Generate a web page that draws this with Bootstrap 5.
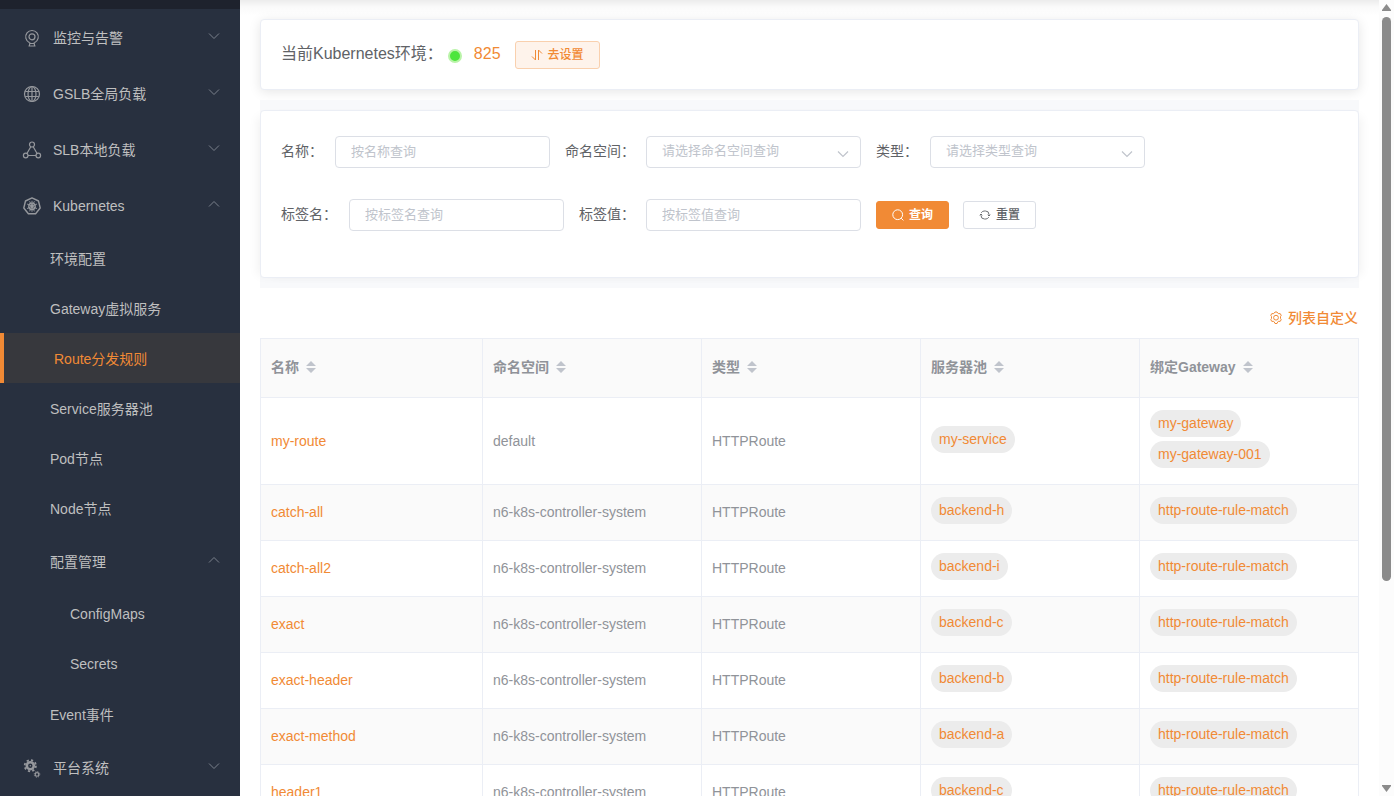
<!DOCTYPE html>
<html lang="zh-CN">
<head>
<meta charset="utf-8">
<meta name="viewport" content="width=device-width, initial-scale=1">
<title>Route分发规则</title>
<link href="https://cdn.jsdelivr.net/npm/bootstrap@5.3.0/dist/css/bootstrap.min.css" rel="stylesheet">
<style>
  :root { --accent: #f18a35; --line: #ebeef5; --field: #dcdfe6; --ink: #606266; --muted: #909399; --faint: #c0c4cc; }
  body { font-family: "Liberation Sans", "Noto Sans CJK SC", sans-serif; font-size: 14px; line-height: 20px; color: var(--ink); background: #fff; }
  a { color: var(--accent); text-decoration: none; }
  svg { display: block; flex: none; }

  .side { width: 240px; background: #28303f; }
  .side-top { height: 9px; background: #1e222d; }
  .side .nav-link { height: 50px; padding: 2px 20px 0 50px; color: #bfbfbf; display: flex; align-items: center; }
  .side .nav-link.top { height: 56px; padding-left: 22px; }
  .side .nav-link.sub { height: 56px; }
  .side .nav-link.deep { padding-left: 70px; padding-top: 0; }
  .side .nav-link.active { background: #37383d; color: var(--accent); border-left: 4px solid var(--accent); }
  .side .ico { width: 20px; height: 20px; margin-right: 11px; color: #96989d; }
  .side .chev { width: 12px; height: 12px; margin-left: auto; margin-bottom: 4px; color: #7b818c; }

  .page { min-width: 0; padding: 19px 20px 0; background: linear-gradient(#ececec, #fafafa 7px, #fff 16px) no-repeat top / 100% 16px; }
  .panel { border: 1px solid var(--line); border-radius: 4px; background: #fff; }
  .env { padding: 20px; margin-bottom: 10px; font-size: 16px; box-shadow: 0 2px 12px rgba(0,0,0,.1); }
  .env-text { line-height: 24px; padding-bottom: 2px; }
  .env .btn { margin: 1px 0 0 14px; }
  .status-dot { width: 14px; height: 14px; border-radius: 50%; background: #4ce53c; border: 2px solid #b9f3a8; margin: 2px 12px 0 5px; }
  .band { background: #f8f9fb; padding: 10px 0; }
  .filters { padding: 25px 20px 46px; box-shadow: -7px 2px 10px -5px rgba(0,0,0,.06), 7px 2px 10px -5px rgba(0,0,0,.06); }
  .filters .line + .line { margin-top: 31px; }
  .field-label { margin-right: 12px; padding-bottom: 2px; white-space: nowrap; }
  .field-label.tight { margin-right: 11px; }
  .box.form-control, .box.form-select { width: 215px; height: 32px; margin-right: 15px; padding: 0 15px 2px; border: 1px solid var(--field); border-radius: 4px; font-size: 13px; line-height: 28px; color: var(--ink); }
  .box.form-control::placeholder { color: var(--faint); opacity: 1; }
  .box.form-select { color: var(--faint); background-position: right 11px top 11px; background-size: 12px 12px;
    background-image: url("data:image/svg+xml,%3Csvg xmlns='http://www.w3.org/2000/svg' viewBox='0 0 12 12'%3E%3Cpath d='M1 3.500l5 5 5-5' fill='none' stroke='%23c0c4cc' stroke-width='1.200'/%3E%3C/svg%3E"); }
  .mini.btn { height: 28px; padding: 0 15px; border-radius: 3px; font-size: 12px; line-height: 16px; font-weight: 500; display: inline-flex; align-items: center; gap: 5px; border: 1px solid var(--field); color: var(--ink); background: #fff; }
  .mini.go { color: var(--accent); background: #fef3eb; border-color: #f9d0ae; }
  .mini.find { color: #fff; background: var(--accent); border-color: var(--accent); font-weight: 700; margin-right: 14px; }
  .custom { margin: 20px 0 10px; padding-right: 1px; font-weight: 500; }
  .custom a { gap: 5px; }

  .grid.table { table-layout: fixed; margin: 0; color: var(--muted); border-color: var(--line); }
  .grid .first { width: 222px; }
  .grid th, .grid td { border: 1px solid var(--line); padding: 12px 10px; vertical-align: middle; line-height: 23px; }
  .grid th { height: 59px; padding: 11px 10px 13px; background: #fafafa; color: var(--muted); font-weight: 700; }
  .grid th span { gap: 7px; }
  .grid tbody tr:nth-child(even) td { background: #fafafa; }
  .tag { display: block; width: fit-content; height: 27px; padding: 0 8px; line-height: 27px; border-radius: 14px; background: #ececec; margin-bottom: 4px; white-space: nowrap; }
  .sort { width: 10px; height: 12px; color: var(--faint); }

  .rail { width: 15px; background: #fcfcfc; padding: 4px 3px; }
  .rail-track { padding: 6px 0; }
  .rail-thumb { height: 74%; border-radius: 5px; background: #8b8b8b; }
</style>
</head>
<body>
<svg width="0" height="0" class="position-absolute" aria-hidden="true">
  <defs>
    <symbol id="down" viewBox="0 0 12 12"><path d="M1 3.500l5 5 5-5" fill="none" stroke="currentColor"/></symbol>
    <symbol id="up" viewBox="0 0 12 12"><path d="M1 8.500l5-5 5 5" fill="none" stroke="currentColor"/></symbol>
    <symbol id="sort" viewBox="0 0 10 12"><path d="M0 5l5-5 5 5zM0 7l5 5 5-5z" fill="currentColor"/></symbol>
  </defs>
</svg>
<div class="d-flex vh-100 overflow-hidden">
  <aside class="side flex-shrink-0 overflow-hidden">
    <div class="side-top"></div>
    <nav class="nav flex-column flex-nowrap">
      <a class="nav-link top" href="#"><svg class="ico" viewBox="0 0 20 20" fill="none" stroke="currentColor" stroke-width="1.200"><path d="M7.500 14.600a6.300 6.300 0 1 1 5 0M8 14.500l-.7 3.500M12 14.500l.7 3.500M6.500 18h7M8 15.500h4"/><circle cx="10" cy="8.800" r="3"/></svg>监控与告警<svg class="chev"><use href="#down"/></svg></a>
      <a class="nav-link top" href="#"><svg class="ico" viewBox="0 0 20 20" fill="none" stroke="currentColor" stroke-width="1.200"><circle cx="10" cy="10" r="7.500"/><ellipse cx="10" cy="10" rx="4" ry="7.500"/><path d="M10 2.500v15M3.200 7.500h13.600M3.200 12.500h13.600"/></svg>GSLB全局负载<svg class="chev"><use href="#down"/></svg></a>
      <a class="nav-link top" href="#"><svg class="ico" viewBox="0 0 20 20" fill="none" stroke="currentColor" stroke-width="1.200"><circle cx="10" cy="4.500" r="2.500"/><circle cx="3.700" cy="15.500" r="2.300"/><circle cx="16.300" cy="15.500" r="2.300"/><path d="M8.800 6.800l-3.900 6.700M11.200 6.800l3.900 6.700M6 15.500h8"/></svg>SLB本地负载<svg class="chev"><use href="#down"/></svg></a>
      <a class="nav-link top" href="#"><svg class="ico" viewBox="0 0 20 20" fill="none" stroke="currentColor" stroke-width="1.400"><path d="M10 1.900l6.500 3.100 1.700 7-4.600 5.800H6.400L1.800 12l1.700-7z" stroke-linejoin="round"/><circle cx="10" cy="10.300" r="3.200"/><circle cx="10" cy="10.300" r="1" fill="currentColor"/><path d="M10 4.800v11M5 8l10 4.600M15 8L5 12.600M7.600 15.300l4.800-10M12.400 15.300l-4.800-10" stroke-width=".9"/></svg>Kubernetes<svg class="chev"><use href="#up"/></svg></a>
      <a class="nav-link" href="#">环境配置</a>
      <a class="nav-link" href="#">Gateway虚拟服务</a>
      <a class="nav-link active" href="#" aria-current="page">Route分发规则</a>
      <a class="nav-link" href="#">Service服务器池</a>
      <a class="nav-link" href="#">Pod节点</a>
      <a class="nav-link" href="#">Node节点</a>
      <a class="nav-link sub" href="#">配置管理<svg class="chev"><use href="#up"/></svg></a>
      <a class="nav-link deep" href="#">ConfigMaps</a>
      <a class="nav-link deep" href="#">Secrets</a>
      <a class="nav-link" href="#">Event事件</a>
      <a class="nav-link top" href="#"><svg class="ico" viewBox="0 0 20 20" fill="none" stroke="currentColor"><circle cx="8.300" cy="7.700" r="3.500" stroke-width="2.600"/><circle cx="8.300" cy="7.700" r="5.600" stroke-width="1.800" stroke-dasharray="2.200 2.198"/><circle cx="8.300" cy="7.700" r=".7" fill="currentColor" stroke="none"/><circle cx="15" cy="16.400" r="1.800" stroke-width="1.200"/><circle cx="15" cy="16.400" r="2.800" stroke-width="1" stroke-dasharray="1.100 1.099"/></svg>平台系统<svg class="chev"><use href="#down"/></svg></a>
    </nav>
  </aside>

  <main class="page flex-fill overflow-hidden">
    <section class="panel env d-flex align-items-center">
      <span class="env-text">当前Kubernetes环境：</span>
      <span class="status-dot"></span>
      <a class="env-text" href="#">825</a>
      <button type="button" class="btn mini go"><svg width="12" height="12" viewBox="0 0 12 12" fill="none" stroke="currentColor"><path d="M4.500 1v10L1 7.500M7.500 11V1L11 4.500"/></svg>去设置</button>
    </section>

    <div class="band">
      <form class="panel filters">
        <div class="line d-flex align-items-center">
          <label class="field-label" for="f-name">名称：</label><input id="f-name" class="form-control box" placeholder="按名称查询">
          <label class="field-label tight" for="f-ns">命名空间：</label><select id="f-ns" class="form-select box"><option>请选择命名空间查询</option></select>
          <label class="field-label" for="f-type">类型：</label><select id="f-type" class="form-select box"><option>请选择类型查询</option></select>
        </div>
        <div class="line d-flex align-items-center">
          <label class="field-label" for="f-key">标签名：</label><input id="f-key" class="form-control box" placeholder="按标签名查询">
          <label class="field-label tight" for="f-val">标签值：</label><input id="f-val" class="form-control box" placeholder="按标签值查询">
          <button type="button" class="btn mini find"><svg width="12" height="12" viewBox="0 0 12 12" fill="none" stroke="currentColor"><circle cx="5.700" cy="5.700" r="4.900"/><path d="M9.200 9.200l2.200 2.200"/></svg>查询</button>
          <button type="button" class="btn mini"><svg width="12" height="12" viewBox="0 0 12 12" fill="none" stroke="currentColor" stroke-width=".9"><path d="M5 2h1.500A3.500 3.500 0 0 1 10 5.500V7M7 10H5.500A3.500 3.500 0 0 1 2 6.500V5M.7 6.300L2 5l1.300 1.300M8.700 5.700L10 7l1.300-1.300M2.200 3.800A4 4 0 0 1 5 2M9.800 8.200A4 4 0 0 1 7 10"/></svg>重置</button>
        </div>
      </form>
    </div>

    <div class="custom d-flex justify-content-end">
      <a class="d-flex align-items-center" href="#"><svg width="14" height="14" viewBox="0 0 14 14" fill="none" stroke="currentColor"><path d="M5.200 2.200L6 1h2l.8 1.200.9.500 1.500-.1 1 1.700-.7 1.300v1.800l.7 1.300-1 1.700-1.500-.1-.9.500L8 12.500H6l-.8-1.700-.9-.5-1.500.1-1-1.700.7-1.300V5.600l-.7-1.300 1-1.700 1.500.1z"/><circle cx="7" cy="6.700" r="2.400"/></svg>列表自定义</a>
    </div>

    <table class="table grid">
      <thead>
        <tr>
          <th class="first" scope="col"><span class="d-flex align-items-center">名称<svg class="sort"><use href="#sort"/></svg></span></th>
          <th scope="col"><span class="d-flex align-items-center">命名空间<svg class="sort"><use href="#sort"/></svg></span></th>
          <th scope="col"><span class="d-flex align-items-center">类型<svg class="sort"><use href="#sort"/></svg></span></th>
          <th scope="col"><span class="d-flex align-items-center">服务器池<svg class="sort"><use href="#sort"/></svg></span></th>
          <th scope="col"><span class="d-flex align-items-center">绑定Gateway<svg class="sort"><use href="#sort"/></svg></span></th>
        </tr>
      </thead>
      <tbody>
        <tr><td><a href="#">my-route</a></td><td>default</td><td>HTTPRoute</td><td><a class="tag" href="#">my-service</a></td><td><a class="tag" href="#">my-gateway</a><a class="tag" href="#">my-gateway-001</a></td></tr>
        <tr><td><a href="#">catch-all</a></td><td>n6-k8s-controller-system</td><td>HTTPRoute</td><td><a class="tag" href="#">backend-h</a></td><td><a class="tag" href="#">http-route-rule-match</a></td></tr>
        <tr><td><a href="#">catch-all2</a></td><td>n6-k8s-controller-system</td><td>HTTPRoute</td><td><a class="tag" href="#">backend-i</a></td><td><a class="tag" href="#">http-route-rule-match</a></td></tr>
        <tr><td><a href="#">exact</a></td><td>n6-k8s-controller-system</td><td>HTTPRoute</td><td><a class="tag" href="#">backend-c</a></td><td><a class="tag" href="#">http-route-rule-match</a></td></tr>
        <tr><td><a href="#">exact-header</a></td><td>n6-k8s-controller-system</td><td>HTTPRoute</td><td><a class="tag" href="#">backend-b</a></td><td><a class="tag" href="#">http-route-rule-match</a></td></tr>
        <tr><td><a href="#">exact-method</a></td><td>n6-k8s-controller-system</td><td>HTTPRoute</td><td><a class="tag" href="#">backend-a</a></td><td><a class="tag" href="#">http-route-rule-match</a></td></tr>
        <tr><td><a href="#">header1</a></td><td>n6-k8s-controller-system</td><td>HTTPRoute</td><td><a class="tag" href="#">backend-c</a></td><td><a class="tag" href="#">http-route-rule-match</a></td></tr>
      </tbody>
    </table>
  </main>

  <div class="rail d-flex flex-column flex-shrink-0" aria-hidden="true">
    <svg width="9" height="7" viewBox="0 0 9 7"><path d="M4.500 0L9 6v1H0V6z" fill="#8b8b8b"/></svg>
    <div class="rail-track flex-fill"><div class="rail-thumb"></div></div>
    <svg width="9" height="7" viewBox="0 0 9 7"><path d="M4.500 7L9 1V0H0v1z" fill="#8b8b8b"/></svg>
  </div>
</div>
<script src="https://cdn.jsdelivr.net/npm/bootstrap@5.3.0/dist/js/bootstrap.bundle.min.js"></script>
</body>
</html>
